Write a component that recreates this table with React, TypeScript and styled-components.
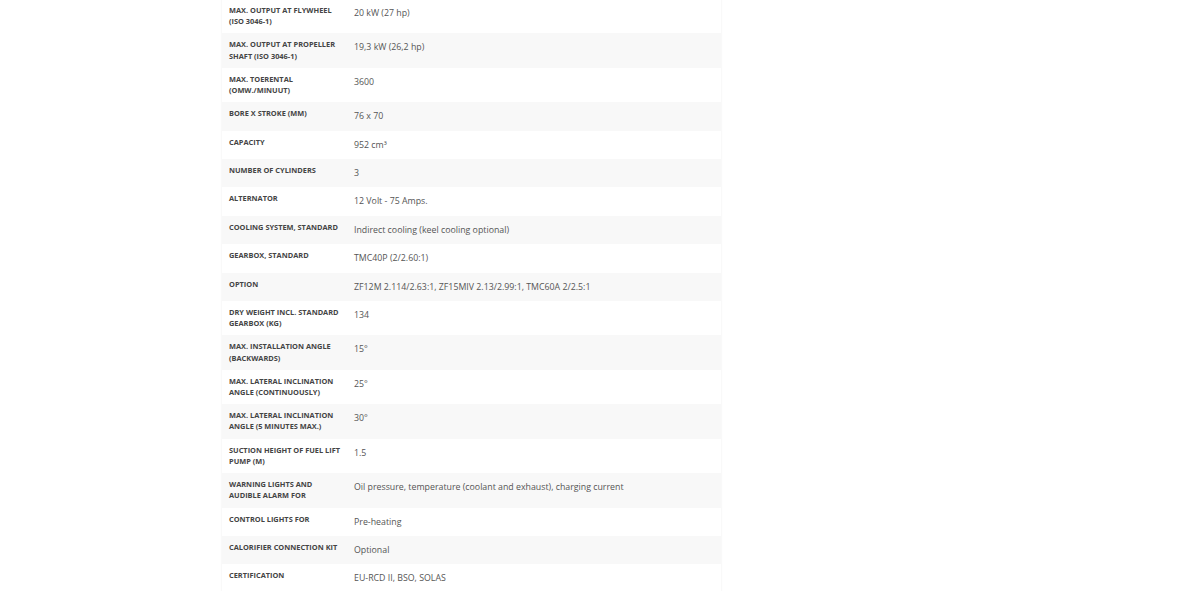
import React from 'react';
import styled, { createGlobalStyle } from 'styled-components';

const specs: [string, string][] = [
  ['Max. output at flywheel (ISO 3046-1)', '20 kW (27 hp)'],
  ['Max. output at propeller shaft (ISO 3046-1)', '19,3 kW (26,2 hp)'],
  ['Max. toerental (omw./minuut)', '3600'],
  ['Bore x stroke (mm)', '76 x 70'],
  ['Capacity', '952 cm³'],
  ['Number of cylinders', '3'],
  ['Alternator', '12 Volt - 75 Amps.'],
  ['Cooling system, standard', 'Indirect cooling (keel cooling optional)'],
  ['Gearbox, standard', 'TMC40P (2/2.60:1)'],
  ['Option', 'ZF12M 2.114/2.63:1, ZF15MIV 2.13/2.99:1, TMC60A 2/2.5:1'],
  ['Dry weight incl. standard gearbox (kg)', '134'],
  ['Max. installation angle (backwards)', '15°'],
  ['Max. lateral inclination angle (continuously)', '25°'],
  ['Max. lateral inclination angle (5 minutes max.)', '30°'],
  ['Suction height of fuel lift pump (m)', '1.5'],
  ['Warning lights and audible alarm for', 'Oil pressure, temperature (coolant and exhaust), charging current'],
  ['Control lights for', 'Pre-heating'],
  ['Calorifier connection kit', 'Optional'],
  ['Certification', 'EU-RCD II, BSO, SOLAS'],
];

function App() {
  return (
    <>
      <GlobalStyle />
      <Page>
        <SpecTable>
          <tbody>
            {specs.map(([label, value], i) => (
              <Row key={label} striped={i % 2 === 1}>
                <Label>{label}</Label>
                <Value>{value}</Value>
              </Row>
            ))}
          </tbody>
        </SpecTable>
      </Page>
    </>
  );
}

export default App;

const GlobalStyle = createGlobalStyle`
  body {
    margin: 0;
    background: #fff;
    font-family: 'Open Sans', sans-serif;
  }
`;

const Page = styled.div`
  padding-left: 222px;
  margin-top: -1px;
`;

const SpecTable = styled.table`
  width: 499px;
  border-collapse: collapse;
  box-shadow: 0 0 2px rgba(0, 0, 0, 0.08);
`;

const Row = styled.tr<{ striped: boolean }>`
  background: ${p => (p.striped ? '#f8f8f8' : '#fff')};
`;

const Label = styled.td`
  width: 113px;
  padding: 6px 5px 6px 7px;
  vertical-align: top;
  font-size: 7.4px;
  line-height: 11.2px;
  font-weight: 700;
  text-transform: uppercase;
  color: #444;
`;

const Value = styled.td`
  padding: 6px 7px;
  vertical-align: top;
  font-size: 8.8px;
  line-height: 16.4px;
  color: #555;
`;
